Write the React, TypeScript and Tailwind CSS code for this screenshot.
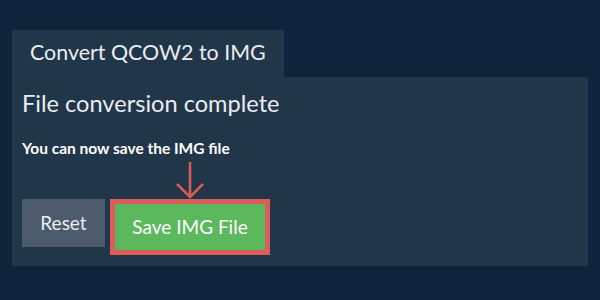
import React from "react";

const App = () => {
  return (
    <div className="w-[600px] h-[300px] bg-[#11233a] pt-[30px] px-[12px] font-['Lato',sans-serif]">
      <div className="w-[272px] h-[47px] bg-[#223649] text-[#e9edf1] text-[21.4px] pl-[18px] pt-[6px]">
        Convert QCOW2 to IMG
      </div>
      <div className="h-[189px] bg-[#223649] px-[10px] pt-[10px] text-[#e9edf1]">
        <div className="text-[23.6px] leading-[32px]">File conversion complete</div>
        <div className="mt-[19px] text-[15.5px] leading-[21px] font-bold text-white">
          You can now save the IMG file
        </div>
        <div className="flex items-start gap-[5px] mt-[3px]">
          <button className="mt-[37px] w-[83px] h-[48px] bg-[#4c5c6d] text-[19px] text-[#e9edf1]">
            Reset
          </button>
          <div className="flex flex-col items-center">
            <svg width="30" height="37" viewBox="0 0 30 37" className="block">
              <path
                d="M15 0 V35 M2 22 L15 35 L28 22"
                fill="none"
                stroke="#d95b57"
                strokeWidth="2.5"
              />
            </svg>
            <button className="w-[160px] h-[56px] border-[5px] border-[#dc5c59] bg-[#5cb85c] text-[19px] text-white">
              Save IMG File
            </button>
          </div>
        </div>
      </div>
    </div>
  );
};

export default App;
